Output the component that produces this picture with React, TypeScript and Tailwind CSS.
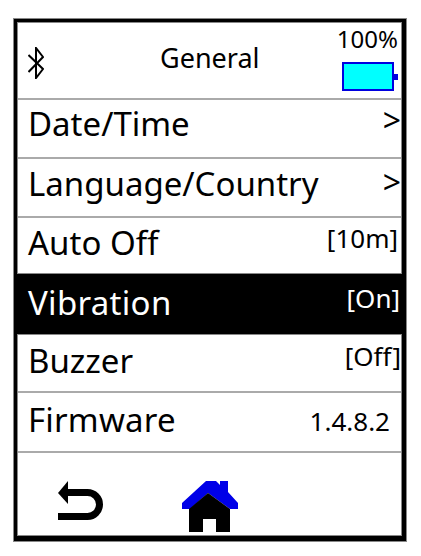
import React from 'react';

const rows = [
    { label: 'Date/Time', value: '>', height: 'h-[59px] border-t-2 border-[#aaa]', labelClass: 'pt-0', valueClass: 'text-[32px] leading-[40px] pr-0 pt-0' },
    { label: 'Language/Country', value: '>', height: 'h-[59px] border-t-2 border-[#aaa]', labelClass: 'pt-[1px]', valueClass: 'text-[32px] leading-[40px] pr-0 pt-[3px]' },
    { label: 'Auto Off', value: '[10m]', height: 'h-[57px] border-t-2 border-[#aaa]', labelClass: 'pt-[1px]', valueClass: 'text-[26px] leading-[36px] pr-[3px] pt-[2px]' },
    { label: 'Vibration', value: '[On]', height: 'h-[62px] -mx-px border-y border-[#888] bg-black text-white', labelClass: 'pt-[5px] tracking-[0.3px]', valueClass: 'text-[26px] leading-[36px] pr-[2px] pt-[6px]', active: true },
    { label: 'Buzzer', value: '[Off]', height: 'h-[56px]', labelClass: 'pt-[2px]', valueClass: 'text-[26px] leading-[36px] pr-0 pt-[3px]' },
    { label: 'Firmware', value: '1.4.8.2', height: 'h-[60px] border-t-2 border-[#aaa]', labelClass: 'pt-[3px] tracking-[0.2px]', valueClass: 'text-[26px] leading-[36px] pr-[11px] pt-[10px]' },
];

const App: React.FC = () => {
    return (
        <div className="w-[421px] h-[556px] bg-white pt-[18px] pl-[13px] font-['Noto_Sans',sans-serif] text-black">
            <div className="w-[394px] h-[524px] border border-[#888] bg-black pt-[3px] pl-[3px]">
                <div className="w-[385px] h-[514px] border border-[#888] bg-white flex flex-col">
                    <div className="h-[75px] shrink-0 flex relative">
                        <svg className="ml-[10px] mt-[24px]" width="16" height="32" viewBox="0 0 16 32" fill="none" stroke="#000" strokeWidth="2">
                            <path d="M0.5 8 L15 22 L8 31 V1 L15 10 L0.5 25" />
                        </svg>
                        <div className="absolute left-[142px] top-[17px] text-[27px] leading-[36px]">General</div>
                        <div className="absolute right-[3px] top-0 flex flex-col items-end">
                            <div className="text-[24px] leading-[32px]">100%</div>
                            <div className="mt-[7px] flex items-center">
                                <div className="w-[52px] h-[29px] bg-[#00ffff] border-2 border-[#0000e0]" />
                                <div className="w-[4px] h-[6px] bg-[#0000e0]" />
                            </div>
                        </div>
                    </div>
                    {rows.map((row) => (
                        <div
                            key={row.label}
                            className={`shrink-0 flex justify-between ${row.height} ${row.active ? 'pl-[11px]' : 'pl-[10px]'}`}
                        >
                            <span className={`text-[33px] leading-[48px] whitespace-nowrap ${row.labelClass}`}>{row.label}</span>
                            <span className={`whitespace-nowrap ${row.valueClass}`}>{row.value}</span>
                        </div>
                    ))}
                    <div className="flex-1 border-t-2 border-[#aaa] flex items-start">
                        <svg className="ml-[40px] mt-[28px]" width="46" height="40" viewBox="0 0 46 40" fill="none">
                            <path d="M0 12 L10 0 V23 Z" fill="#000" />
                            <path d="M8 11.5 H29.5 A12 12 0 0 1 29.5 35.5 H0" stroke="#000" strokeWidth="7" />
                        </svg>
                        <svg className="ml-[78px] mt-[28px]" width="56" height="52" viewBox="0 0 56 52">
                            <path d="M0 28 V22 L24 0 H34 L38 4 V0 H46 V11 L56 22 V28 H48 L26 12 L8 28 Z" fill="#0000e8" />
                            <path d="M26 12 L48 28 V51 H34 V38 H21 V51 H7 V28 Z" fill="#000" />
                        </svg>
                    </div>
                </div>
            </div>
        </div>
    );
};

export default App;
